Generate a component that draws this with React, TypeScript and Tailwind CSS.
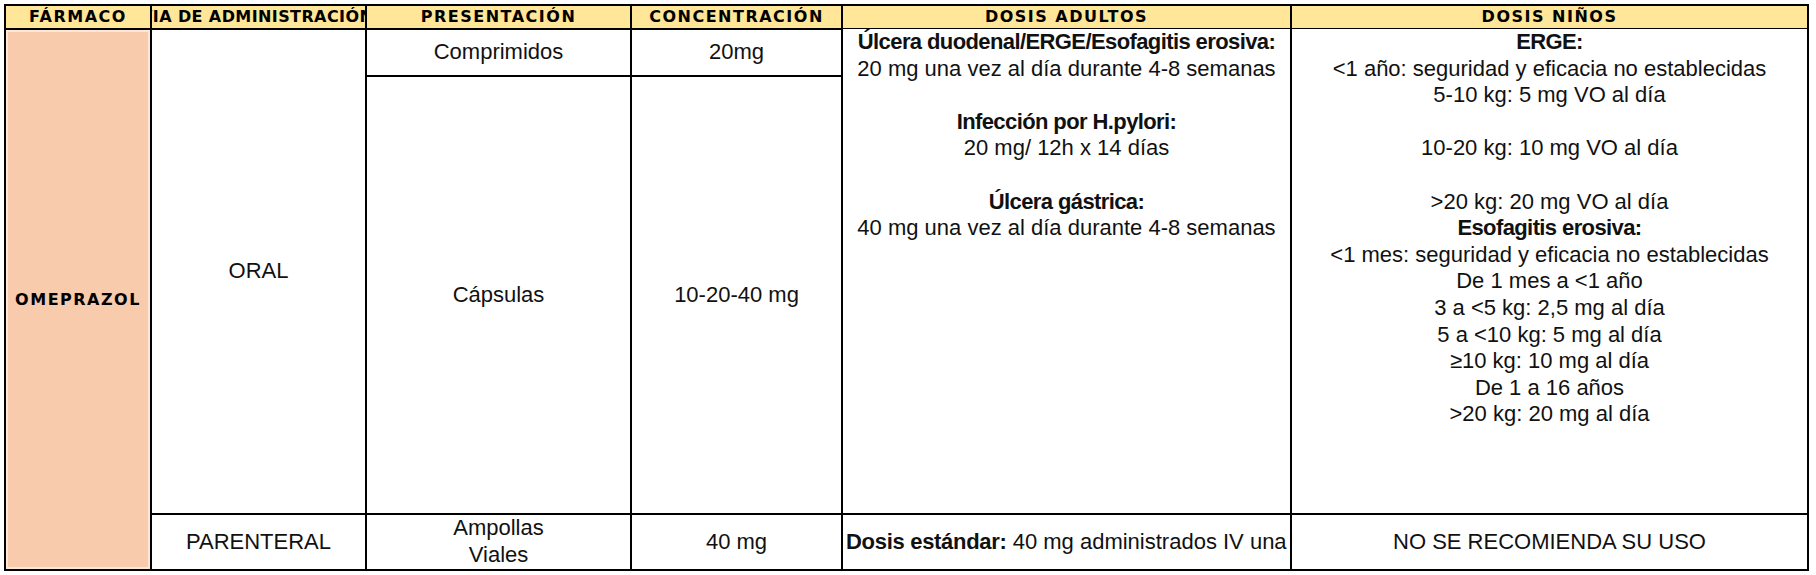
import React from 'react';

const body = "font-['Liberation_Sans',Arial,sans-serif] text-[22px] leading-[26.6px] text-[#111]";
const head =
  "flex items-center justify-center overflow-hidden whitespace-nowrap bg-[#ffe699] font-['DejaVu_Sans',Verdana,sans-serif] text-[16px] font-bold tracking-[1.5px] text-black";
const center = `flex items-center justify-center text-center bg-white ${body}`;

const headers = ['PRESENTACIÓN', 'CONCENTRACIÓN', 'DOSIS ADULTOS', 'DOSIS NIÑOS'];

// lines of the children dose cell; null = empty line
const ninos: (string | null)[] = [
  'b:ERGE:',
  '<1 año: seguridad y eficacia no establecidas',
  '5-10 kg: 5 mg VO al día',
  null,
  '10-20 kg: 10 mg VO al día',
  null,
  '>20 kg: 20 mg VO al día',
  'b:Esofagitis erosiva:',
  '<1 mes: seguridad y eficacia no establecidas',
  'De 1 mes a <1 año',
  '3 a <5 kg: 2,5 mg al día',
  '5 a <10 kg: 5 mg al día',
  '≥10 kg: 10 mg al día',
  'De 1 a 16 años',
  '>20 kg: 20 mg al día',
];

const adultos: (string | null)[] = [
  'b:Úlcera duodenal/ERGE/Esofagitis erosiva:',
  '20 mg una vez al día durante 4-8 semanas',
  null,
  'b:Infección por H.pylori:',
  '20 mg/ 12h x 14 días',
  null,
  'b:Úlcera gástrica:',
  '40 mg una vez al día durante 4-8 semanas',
];

function Lines({ lines }: { lines: (string | null)[] }) {
  return (
    <>
      {lines.map((l, i) =>
        l === null ? (
          <div key={i} className="h-[26.6px]" />
        ) : l.startsWith('b:') ? (
          <div key={i} className="font-bold tracking-[-0.6px]">
            {l.slice(2)}
          </div>
        ) : (
          <div key={i}>{l}</div>
        ),
      )}
    </>
  );
}

export default function App() {
  return (
    <div className="min-h-[575px] w-[1816px] bg-white pl-[4px] pt-[4px]">
      <div className="grid w-fit grid-cols-[144px_213px_263px_209px_447px_515px] grid-rows-[22px_45px_436px_54px] gap-[2px] bg-black p-[2px]">
        <div className={head}>FÁRMACO</div>
        {/* header text is wider than the cell, clipped like the spreadsheet */}
        <div className={`${head} !justify-start !tracking-[0.4px]`}>
          <span className="-ml-[12px]">VIA DE ADMINISTRACIÓN</span>
        </div>
        {headers.map((h) => (
          <div key={h} className={head}>
            {h}
          </div>
        ))}

        {/* Fármaco */}
        <div className="col-start-1 row-start-2 row-span-3 flex items-center justify-center bg-[#f8cbad] shadow-[inset_0_0_0_2px_#fde6d6]">
          <span className="font-['DejaVu_Sans',Verdana,sans-serif] text-[16px] font-bold tracking-[1.5px] text-black">
            OMEPRAZOL
          </span>
        </div>

        {/* Vía */}
        <div className={`col-start-2 row-start-2 row-span-2 ${center}`}>ORAL</div>
        <div className={`col-start-2 row-start-4 ${center}`}>PARENTERAL</div>

        {/* Presentación / concentración */}
        <div className={`col-start-3 row-start-2 ${center}`}>Comprimidos</div>
        <div className={`col-start-4 row-start-2 ${center}`}>20mg</div>
        <div className={`col-start-3 row-start-3 ${center}`}>Cápsulas</div>
        <div className={`col-start-4 row-start-3 ${center}`}>10-20-40 mg</div>
        <div className={`col-start-3 row-start-4 flex-col ${center}`}>
          <div>Ampollas</div>
          <div>Viales</div>
        </div>
        <div className={`col-start-4 row-start-4 ${center}`}>40 mg</div>

        {/* Dosis adultos */}
        <div className={`col-start-5 row-start-2 row-span-2 bg-white text-center ${body} -mt-px`}>
          <Lines lines={adultos} />
        </div>
        <div className={`col-start-5 row-start-4 flex items-center overflow-hidden whitespace-nowrap bg-white pl-[3px] ${body}`}>
          <span className="font-bold tracking-[-0.3px]">Dosis estándar:</span>
          &nbsp;40 mg administrados IV una vez al día
        </div>

        {/* Dosis niños */}
        <div className={`col-start-6 row-start-2 row-span-2 bg-white text-center ${body} -mt-px`}>
          <Lines lines={ninos} />
        </div>
        <div className={`col-start-6 row-start-4 ${center}`}>NO SE RECOMIENDA SU USO</div>
      </div>
    </div>
  );
}
